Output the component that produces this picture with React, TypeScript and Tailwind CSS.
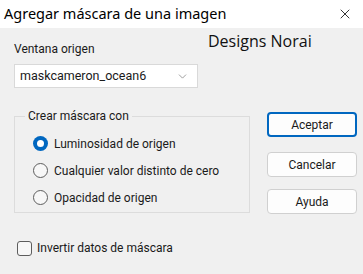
import { ChevronDown, X } from 'lucide-react';

const font = { fontFamily: 'Roboto, "Noto Sans", sans-serif' };

function Radio({ label, checked = false }: { label: string; checked?: boolean }) {
  return (
    <label className="flex items-center gap-[6px] h-[27px]">
      {checked ? (
        <span className="w-[15px] h-[15px] rounded-full bg-[#0067c0] flex items-center justify-center">
          <span className="w-[7px] h-[7px] rounded-full bg-white" />
        </span>
      ) : (
        <span className="w-[15px] h-[15px] rounded-full border border-[#5d5d5d] bg-[#f7f7f7]" />
      )}
      <span>{label}</span>
    </label>
  );
}

function Button({ label, primary = false }: { label: string; primary?: boolean }) {
  return (
    <button
      className={`w-[90px] h-[25px] rounded-[4px] bg-[#fdfdfd] text-[12px] text-[#1a1a1a] ${
        primary ? 'border-2 border-[#0067c0]' : 'border border-[#d0d0d0]'
      }`}
    >
      {label}
    </button>
  );
}

export default function App() {
  return (
    <div className="w-[363px] h-[274px] bg-[#f0f0f0] text-[12px] text-[#1a1a1a] overflow-hidden" style={font}>
      {/* title bar */}
      <div
        className="h-[28px] bg-white flex items-center justify-between pl-[4px] pr-[10px]"
        style={{ fontFamily: '"Noto Sans", sans-serif' }}
      >
        <span className="text-[14.5px] text-black">Agregar máscara de una imagen</span>
        <X size={16} strokeWidth={1.2} className="text-black" />
      </div>

      <div className="flex">
        {/* left column */}
        <div className="pl-[14px] w-[254px]">
          <div className="pt-[13px]">
            <div className="leading-[16px]">Ventana origen</div>
            <div className="mt-[7px] w-[184px] h-[24px] bg-white border border-[#d9d9d9] flex items-center justify-between pl-[5px] pr-[8px]">
              <span className="text-[12.5px]">maskcameron_ocean6</span>
              <ChevronDown size={13} strokeWidth={1.3} className="text-[#777]" />
            </div>
          </div>

          <fieldset className="mt-[21px] w-[236px] border border-[#dcdcdc] pl-[18px] pb-[1px] pt-[7px]">
            <legend className="-ml-[8px] px-[3px] leading-[14px]">Crear máscara con</legend>
            <Radio label="Luminosidad de origen" checked />
            <Radio label="Cualquier valor distinto de cero" />
            <Radio label="Opacidad de origen" />
          </fieldset>

          <label className="mt-[26px] ml-[3px] flex items-center gap-[5px]">
            <span className="w-[15px] h-[15px] rounded-[3px] border border-[#5d5d5d] bg-[#f7f7f7]" />
            <span>Invertir datos de máscara</span>
          </label>
        </div>

        {/* right column */}
        <div className="flex-1 flex flex-col">
          <div
            className="pt-[1px] -ml-[46px] text-[16px] text-[#111]"
            style={{ fontFamily: '"Open Sans", sans-serif' }}
          >
            Designs Norai
          </div>
          <div className="mt-[59px] ml-[13px] flex flex-col gap-[15px]">
            <Button label="Aceptar" primary />
            <div className="flex flex-col gap-[12px]">
              <Button label="Cancelar" />
              <Button label="Ayuda" />
            </div>
          </div>
        </div>
      </div>
    </div>
  );
}
